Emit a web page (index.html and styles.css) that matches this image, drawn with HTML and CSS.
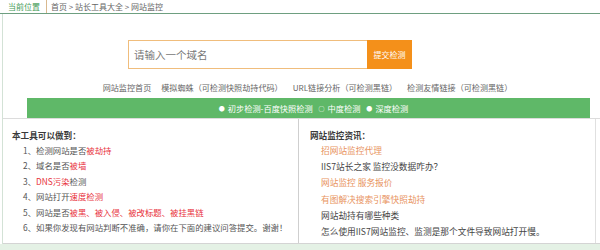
FILE: index.html
```html
<!DOCTYPE html>
<html lang="zh">
<head>
<meta charset="utf-8">
<title>网站监控</title>
<link rel="stylesheet" href="styles.css">
</head>
<body>
<div class="crumb">
  <span class="crumb-cur">当前位置</span>
  <span class="crumb-path">首页 &gt; 站长工具大全 &gt; 网站监控</span>
</div>
<div class="main">
  <div class="search">
    <span class="search-input">请输入一个域名</span>
    <span class="search-btn">提交检测</span>
  </div>
  <div class="links">
    <span>网站监控首页</span>
    <span>模拟蜘蛛（可检测快照劫持代码）</span>
    <span>URL链接分析（可检测黑链）</span>
    <span>检测友情链接（可检测黑链）</span>
  </div>
  <div class="bar">
    <span><span class="dot">●</span>初步检测-百度快照检测</span>
    <span><span class="dot">○</span>中度检测</span>
    <span><span class="dot">●</span>深度检测</span>
  </div>
  <div class="panels">
    <div class="panel panel-left">
      <div class="panel-title">本工具可以做到：</div>
      <ul class="list list-left">
        <li>1、检测网站是否<span class="red">被劫持</span></li>
        <li>2、域名是否<span class="red">被墙</span></li>
        <li>3、<span class="red">DNS污染</span>检测</li>
        <li>4、网站打开<span class="red">速度检测</span></li>
        <li>5、网站是否<span class="red">被黑、被入侵、被改标题、被挂黑链</span></li>
        <li>6、如果你发现有网站判断不准确，请你在下面的建议问答提交。谢谢！</li>
      </ul>
    </div>
    <div class="panel panel-right">
      <div class="panel-title">网站监控资讯：</div>
      <ul class="list list-right">
        <li class="orange">招网站监控代理</li>
        <li>IIS7站长之家 监控没数据咋办？</li>
        <li class="orange">网站监控 服务报价</li>
        <li class="orange">有图解决搜索引擎快照劫持</li>
        <li>网站劫持有哪些种类</li>
        <li>怎么使用IIS7网站监控、监测是那个文件导致网站打开慢。</li>
      </ul>
    </div>
  </div>
</div>
<div class="foot"></div>
</body>
</html>
```

FILE: styles.css
```css
* { box-sizing: border-box; }
html, body { margin: 0; padding: 0; background: #fff; }
body {
  font-family: "Noto Sans CJK SC", "Microsoft YaHei", sans-serif;
  font-size: 9px;
  color: #555;
  width: 600px;
  height: 250px;
  overflow: hidden;
}
.crumb {
  display: flex;
  height: 14px;
  line-height: 13px;
  font-size: 8px;
  border-bottom: 1px solid #6e9f80;
}
.crumb-cur {
  color: #3f9a55;
  padding: 0 6px 0 8px;
  border-right: 1px solid #d9b98f;
}
.crumb-path {
  color: #666;
  padding-left: 4px;
}
.main {
  margin-left: 2px;
  border-left: 1px solid #d3e2d6;
}
.search {
  display: flex;
  padding-top: 26px;
  margin-left: 125px;
  height: 55px;
}
.search-input {
  width: 239px;
  height: 29px;
  line-height: 27px;
  border: 1px solid #f0bd7c;
  border-right: none;
  padding-left: 5px;
  color: #777;
  font-size: 10.5px;
  background: #fff;
}
.search-btn {
  width: 45px;
  height: 29px;
  line-height: 29px;
  background: #f4901a;
  color: #fff;
  text-align: center;
  font-size: 8px;
}
.links {
  display: flex;
  justify-content: center;
  gap: 10px;
  margin-top: 13px;
  height: 12px;
  line-height: 12px;
  font-size: 8.1px;
  color: #666;
  padding-left: 12px;
}
.bar {
  display: flex;
  justify-content: center;
  gap: 6px;
  margin-top: 4px;
  margin-left: 24px;
  margin-right: 10px;
  padding-left: 10px;
  height: 20px;
  line-height: 20px;
  background: #5fb868;
  color: #fff;
  font-size: 8.2px;
}
.dot {
  font-size: 6px;
  margin-right: 3px;
  vertical-align: 1px;
}
.panels {
  display: grid;
  grid-template-columns: 296px 297px;
  height: 126px;
  border-top: 1px solid #dcdcdc;
  border-bottom: 1px solid #d4d4d4;
}
.panel {
  padding-top: 8px;
}
.panel-left {
  border-right: 1px solid #cfcfcf;
  padding-left: 9px;
}
.panel-right {
  border-right: 1px solid #e0e0e0;
  padding-left: 11px;
}
.panel-title {
  height: 16px;
  line-height: 16px;
  font-weight: bold;
  font-size: 8.6px;
  color: #3a3a3a;
}
.list {
  list-style: none;
  margin: 0;
  padding: 0 0 0 11px;
}
.list-left li {
  height: 15.4px;
  line-height: 15.4px;
  font-size: 8.4px;
  white-space: nowrap;
}
.list-right li {
  height: 16.2px;
  line-height: 16.2px;
  font-size: 8.7px;
  color: #444;
  white-space: nowrap;
}
.red { color: #e8323c; }
.list-right li.orange { color: #e8935e; }
.foot {
  height: 7px;
  background: #e4f1e5;
}
```
